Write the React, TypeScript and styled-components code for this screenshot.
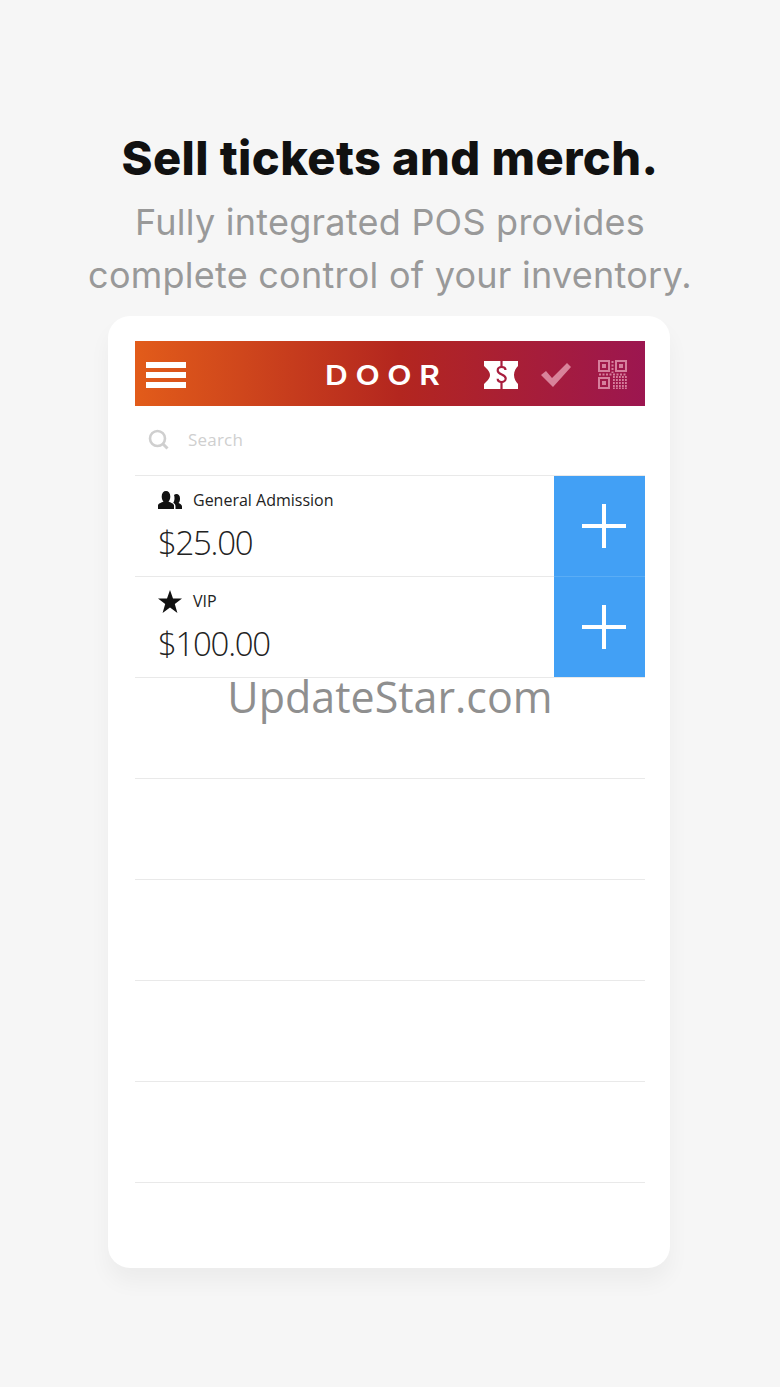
import { createGlobalStyle } from 'styled-components';
import styled from 'styled-components';

const GlobalStyle = createGlobalStyle`
  html, body {
    margin: 0;
    padding: 0;
    background: #f6f6f6;
  }
`;

const Page = styled.main`
  position: relative;
  width: 780px;
  height: 1387px;
  padding-top: 129px;
  box-sizing: border-box;
  background: #f6f6f6;
  font-family: 'Open Sans', 'Noto Sans', sans-serif;
  overflow: hidden;
`;

const Title = styled.h1`
  margin: 0;
  height: 58px;
  font-family: Inter, Lato, sans-serif;
  font-size: 47px;
  line-height: 58px;
  font-weight: 800;
  letter-spacing: 0.4px;
  color: #111;
  text-align: center;
`;

const Subtitle = styled.p`
  margin: 9px 0 0;
  font-family: Inter, Lato, sans-serif;
  font-size: 36px;
  line-height: 53px;
  font-weight: 400;
  letter-spacing: 0.25px;
  color: #999;
  text-align: center;
`;

const Card = styled.section`
  width: 562px;
  height: 952px;
  margin: 14px 0 0 108px;
  padding: 25px 25px 0 27px;
  box-sizing: border-box;
  background: #fff;
  border-radius: 22px;
  box-shadow: 0 14px 22px rgba(0, 0, 0, 0.045);
`;

const AppBar = styled.header`
  display: flex;
  align-items: center;
  height: 65px;
  padding: 2px 18px 0 11px;
  box-sizing: border-box;
  background: linear-gradient(90deg, #e25c1a 0%, #b3261f 52%, #9c1650 100%);
`;

const Burger = styled.div`
  display: flex;
  flex-direction: column;
  justify-content: space-between;
  width: 40px;
  height: 26px;

  span {
    height: 6px;
    background: #fff;
  }
`;

const Brand = styled.span`
  margin: 2px 0 0 139px;
  font-family: Inter, sans-serif;
  font-size: 27px;
  line-height: 1;
  font-weight: 600;
  letter-spacing: 6.5px;
  color: #fff;
  transform: scaleX(1.17);
  transform-origin: left center;
`;

const BarIcons = styled.div`
  display: flex;
  align-items: center;
  gap: 23px;
  margin-left: auto;
`;

const SearchRow = styled.div`
  display: flex;
  align-items: center;
  gap: 19px;
  height: 69px;
  padding: 0 0 2px 13px;
  box-sizing: border-box;
  font-size: 17px;
  letter-spacing: 0.2px;
  color: #cfcfcf;
`;

const Row = styled.div`
  position: relative;
  display: flex;
  height: 101px;
  box-sizing: border-box;
  border-top: 1px solid #e9e9e9;
`;

const LastRule = styled.div`
  height: 1px;
  background: #e9e9e9;
`;

const RowBody = styled.div`
  flex: 1;
  padding: 12px 0 0 23px;
`;

const RowLabel = styled.div`
  display: flex;
  align-items: center;
  gap: 11px;
  height: 24px;
  font-size: 16px;
  color: #222;
`;

const Price = styled.div`
  margin-top: 9px;
  font-size: 33px;
  line-height: 44px;
  font-weight: 300;
  letter-spacing: -1.3px;
  color: #222;
`;

const AddButton = styled.div<{ $first: boolean }>`
  display: flex;
  align-items: center;
  justify-content: center;
  width: 91px;
  margin-top: ${(p) => (p.$first ? '0' : '-1px')};
  padding-left: 9px;
  box-sizing: border-box;
  background: #42a0f5;
  border-top: ${(p) => (p.$first ? '0' : '1px solid #5aadf6')};
`;

const Watermark = styled.div`
  position: absolute;
  top: 666px;
  left: 0;
  width: 780px;
  font-size: 43px;
  line-height: 62px;
  color: #8f8f8f;
  text-align: center;
`;

const Plus = () => (
  <svg width="44" height="44" viewBox="0 0 44 44">
    <path d="M22 0v44M0 22h44" stroke="#fff" strokeWidth="4" fill="none" />
  </svg>
);

const People = () => (
  <svg width="24" height="18" viewBox="0 0 24 18">
    <path d="M0 18v-3.500c0-2 3.500-3 5.500-4-1-1-1.800-2.500-1.800-5C3.700 2 5.500 0 8 0s4.300 2 4.300 5.500c0 2.500-.8 4-1.800 5 2 1 5.500 2 5.500 4V18z" fill="#111" />
    <path d="M17.500 18H24v-2.500c0-1.700-2.200-2.800-3.500-3.500 1-1 1.500-2.500 1.500-4.500C22 4.500 20.500 3 18.500 3c-1 0-1.800.3-2.500 1 .4 1 .5 2 .5 3.200 0 1.800-.5 3.500-1.300 4.600 1.500.8 2.300 2.200 2.300 3.700z" fill="#111" />
  </svg>
);

const Star = () => (
  <svg width="24" height="23" viewBox="0 0 24 23">
    <path d="M12 0l3 8.500h9l-7.200 5.400L19.400 23 12 17.500 4.600 23l2.600-9.100L0 8.500h9z" fill="#111" />
  </svg>
);

const TicketIcon = () => (
  <svg width="34" height="28" viewBox="0 0 34 28">
    <path d="M0 0h34v5c-2 2-4 5-4 9s2 7 4 9v5H0v-5c2-2 6-5 6-9S2 7 0 5z" fill="#fff" />
    <path d="M21.500 9c0-2-1.800-3-3.800-3-2.500 0-4 1.500-4 3.500 0 4.500 8 3.500 8 8 0 2-1.800 3.500-4 3.500s-4-1.200-4-3.200" stroke="#a81d3d" strokeWidth="2.200" fill="none" />
    <path d="M17.500 0v6M17.500 21v7" stroke="#a81d3d" strokeWidth="2.200" fill="none" />
  </svg>
);

const CheckIcon = () => (
  <svg width="34" height="24" viewBox="0 0 34 24">
    <path d="M0 12l5-4 6 7L26 0l4 4-18 20z" fill="#d9839a" />
  </svg>
);

const QrIcon = () => (
  <svg width="29" height="29" viewBox="0 0 29 29" fill="none" stroke="#d67f9c">
    <rect x="1" y="1" width="10" height="10" strokeWidth="2" />
    <rect x="18" y="1" width="10" height="10" strokeWidth="2" />
    <rect x="1" y="18" width="10" height="10" strokeWidth="2" />
    <rect x="4" y="4" width="4" height="4" fill="#d67f9c" stroke="none" />
    <rect x="21" y="4" width="4" height="4" fill="#d67f9c" stroke="none" />
    <rect x="4" y="21" width="4" height="4" fill="#d67f9c" stroke="none" />
    <path d="M14.500 1v12M1 14.500h27" strokeWidth="2" strokeDasharray="2 1.500" />
    <path d="M15 17h14M15 20h14M15 23h14M15 26h14M15 28.500h14" strokeWidth="1.800" strokeDasharray="1.800 1.200" />
  </svg>
);

const SearchIcon = () => (
  <svg width="21" height="21" viewBox="0 0 21 21" fill="none" stroke="#cfcfcf">
    <circle cx="9.500" cy="9.500" r="7.500" strokeWidth="2.600" />
    <path d="M15 15l4.500 4.500" strokeWidth="3" />
  </svg>
);

const items = [
  { name: 'General Admission', price: '$25.00', icon: <People /> },
  { name: 'VIP', price: '$100.00', icon: <Star /> },
];

export default function App() {
  return (
    <Page>
      <GlobalStyle />
      <Title>Sell tickets and merch.</Title>
      <Subtitle>
        Fully integrated POS provides
        <br />
        complete control of your inventory.
      </Subtitle>

      <Card>
        <AppBar>
          <Burger>
            <span />
            <span />
            <span />
          </Burger>
          <Brand>DOOR</Brand>
          <BarIcons>
            <TicketIcon />
            <CheckIcon />
            <QrIcon />
          </BarIcons>
        </AppBar>

        <SearchRow>
          <SearchIcon />
          Search
        </SearchRow>

        {items.map((item, i) => (
          <Row key={item.name}>
            <RowBody>
              <RowLabel>
                {item.icon}
                {item.name}
              </RowLabel>
              <Price>{item.price}</Price>
            </RowBody>
            <AddButton $first={i === 0}>
              <Plus />
            </AddButton>
          </Row>
        ))}
        {[0, 1, 2, 3, 4].map((i) => (
          <Row key={i} />
        ))}
        <LastRule />
      </Card>

      <Watermark>UpdateStar.com</Watermark>
    </Page>
  );
}
